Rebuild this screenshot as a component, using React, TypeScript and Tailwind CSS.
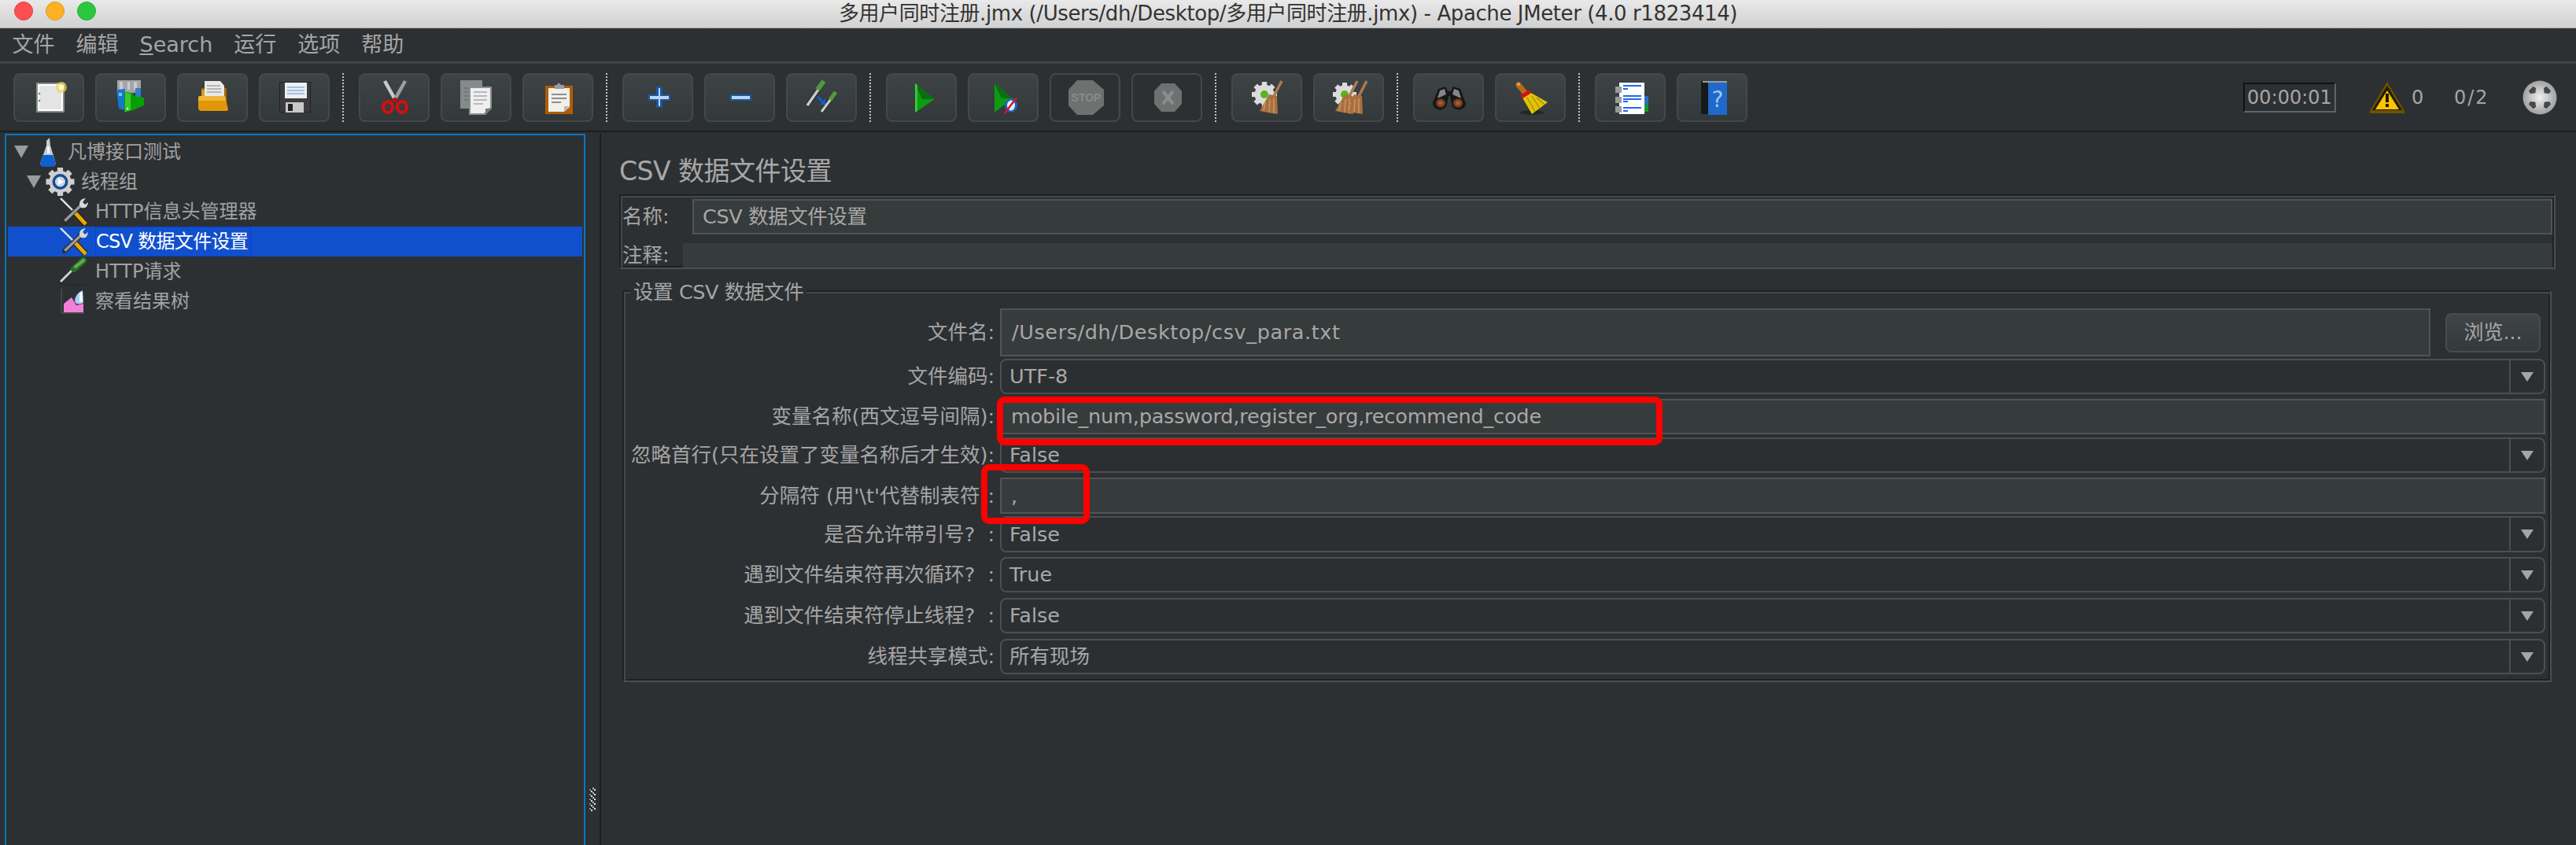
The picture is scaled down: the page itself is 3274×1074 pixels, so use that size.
import type { ReactNode } from "react";

const Svg = ({ children, box = "0 0 48 48", cls = "w-12 h-12" }: { children: ReactNode; box?: string; cls?: string }) => (
  <svg viewBox={box} className={`${cls} shrink-0`}>
    {children}
  </svg>
);

// gear shape shared by thread group + clear icons
const Gear = ({ cx, cy, r, fill = "#dcdcdc" }: { cx: number; cy: number; r: number; fill?: string }) => (
  <g>
    <circle cx={cx} cy={cy} r={r * 0.78} fill={fill} />
    {[0, 45, 90, 135, 180, 225, 270, 315].map((a) => (
      <rect
        key={a}
        x={cx - r * 0.2}
        y={cy - r}
        width={r * 0.4}
        height={r * 0.4}
        fill={fill}
        transform={`rotate(${a} ${cx} ${cy})`}
      />
    ))}
  </g>
);

const Broom = ({ dx = 0 }: { dx?: number }) => (
  <g transform={`translate(${dx} 0)`}>
    <path d="M43 3 L31 26" stroke="#a97b4f" strokeWidth="3.5" />
    <path d="M27 20 L37 22 L38 45 L25 43 L15 41 Z" fill="#a8703f" />
    <path d="M22 30 L20 41 M28 26 L27 43 M33 25 L33 44" stroke="#c99461" strokeWidth="1.6" />
  </g>
);

const icons: Record<string, ReactNode> = {
  new: (
    <Svg>
      <rect x="8" y="5" width="36" height="38" fill="#8b8d8b" />
      <rect x="10" y="7" width="32" height="34" fill="#fff" />
      <rect x="12" y="9" width="28" height="30" fill="#e4e4e4" />
      <circle cx="12" cy="19" r="1.3" fill="#777" />
      <circle cx="12" cy="28" r="1.3" fill="#777" />
      <circle cx="40" cy="11" r="7" fill="#e6d84f" opacity="0.7" />
      <circle cx="40" cy="11" r="3.5" fill="#fff8c8" />
    </Svg>
  ),
  templates: (
    <Svg>
      <rect x="7" y="2" width="30" height="16" fill="#a3a5a7" />
      <path d="M10 4h4v10h-4zM20 4h3v10h-3zM28 4h4v10h-4z" fill="#c9cbcc" />
      <path d="M6 14 L17 13 L17 40 L9 38 Z" fill="#1877c9" />
      <rect x="9" y="18" width="4" height="4" fill="#7cc0f0" />
      <path d="M30 12h7v14h-7z" fill="#2a82c4" />
      <path d="M16 17 L26 18 L28 22 L41 24 L41 34 L27 40 L16 43 Z" fill="#05a005" />
      <path d="M17 18 L24 19 L24 40 L17 42 Z" fill="#3ec82b" />
      <rect x="19" y="37" width="2" height="2" fill="#fff" />
    </Svg>
  ),
  open: (
    <Svg>
      <path d="M10 12 H42 V38 H10 Z" fill="#a96400" />
      <path d="M14 3 H34 L39 9 V26 H14 Z" fill="#e9e9e9" />
      <path d="M17 9h17M17 13h18M17 17h18" stroke="#a4a4a4" strokeWidth="1.4" />
      <path d="M10 14 H14 V22 H10 Z" fill="#dd9a14" />
      <path d="M6 24 Q6 22 9 22 H40 L44 39 Q44 41 41 41 H10 Q6 41 6 37 Z" fill="#e09708" />
      <path d="M6 24 Q6 22 9 22 H40 L41 28 H6 Z" fill="#f0b53a" />
    </Svg>
  ),
  save: (
    <Svg>
      <path d="M5 4 H45 V43 H5 Z" fill="#222" />
      <rect x="6" y="5" width="38" height="37" fill="#3c3c3c" />
      <rect x="12" y="5" width="28" height="20" fill="#e9f0f6" />
      <path d="M15 11h22M15 15h22M15 19h22" stroke="#91b1cf" strokeWidth="1.6" />
      <rect x="13" y="30" width="23" height="13" fill="#c8c8c8" />
      <rect x="16" y="32" width="6" height="9" fill="#222" />
    </Svg>
  ),
  cut: (
    <Svg>
      <path d="M12 3 L26 28" stroke="#c9c9c9" strokeWidth="4.5" />
      <path d="M38 3 L24 28" stroke="#9d9d9d" strokeWidth="4.5" />
      <ellipse cx="16" cy="36" rx="6" ry="7" fill="none" stroke="#d80d0d" strokeWidth="4" />
      <ellipse cx="34" cy="36" rx="6" ry="7" fill="none" stroke="#d80d0d" strokeWidth="4" />
      <circle cx="25" cy="27" r="3" fill="#c40808" />
    </Svg>
  ),
  copy: (
    <Svg>
      <rect x="4" y="2" width="28" height="36" fill="#858a8c" />
      <path d="M9 12h16M9 17h16M9 22h16M9 27h16" stroke="#6b7072" strokeWidth="1.4" />
      <path d="M15 10 H44 V38 L36 46 H15 Z" fill="#8c8f8f" />
      <path d="M17 12 H42 V36 L34 44 H17 Z" fill="#efefef" />
      <path d="M21 17h17M21 22h17M21 27h17M21 32h12" stroke="#a8a8a8" strokeWidth="1.6" />
      <path d="M36 46 V38 H44 Z" fill="#777" />
    </Svg>
  ),
  paste: (
    <Svg>
      <rect x="8" y="9" width="35" height="36" fill="#b25c06" />
      <path d="M12 12 H39 V36 L32 42 H12 Z" fill="#f0f0ea" />
      <path d="M16 20h19M16 25h19M16 30h12" stroke="#8f8f8f" strokeWidth="1.8" />
      <path d="M32 42 L32 35 L39 35 Z" fill="#b9b9b3" />
      <path d="M20 8 H23 Q25 3 28 8 H32 V13 H20 Z" fill="#9a9d9f" />
    </Svg>
  ),
  plus: (
    <Svg>
      <path d="M22 10 H30 V20 H40 V28 H30 V37 H22 V28 H12 V20 H22 Z" fill="#1b56a3" />
      <path d="M25 12 H27 V22 H38 V26 H27 V35 H25 V26 H14 V22 H25 Z" fill="#b9d6f4" />
    </Svg>
  ),
  minus: (
    <Svg>
      <rect x="12" y="20" width="27" height="8" fill="#1b56a3" />
      <rect x="14" y="22" width="23" height="4" fill="#b9d6f4" />
    </Svg>
  ),
  dup: (
    <Svg>
      <path d="M6 34 L20 14" stroke="#2c2c2c" strokeWidth="6" />
      <path d="M6 34 L20 14" stroke="#c9c9c9" strokeWidth="3.5" />
      <path d="M19 14 L27 3" stroke="#4f9b3c" strokeWidth="6" />
      <path d="M24 42 L36 26" stroke="#2c2c2c" strokeWidth="5" />
      <path d="M24 42 L36 26" stroke="#cfcfcf" strokeWidth="3" />
      <path d="M35 27 L42 17" stroke="#4f9b3c" strokeWidth="5" />
      <path d="M19 23 L26 30" stroke="#0d5fd6" strokeWidth="2.5" />
      <path d="M29 25 L29 33 L22 33 Z" fill="#0d5fd6" />
    </Svg>
  ),
  start: (
    <Svg>
      <path d="M16 6 L41 26 L16 43 Z" fill="#0b9c11" />
      <path d="M16 6 L41 26 L25 26 Z" fill="#0c6d12" />
      <path d="M16 6 L19 8 L19 41 L16 43 Z" fill="#35c93a" />
    </Svg>
  ),
  startNo: (
    <Svg>
      <path d="M13 6 L36 25 L13 43 Z" fill="#0b9c11" />
      <path d="M13 6 L36 25 L22 25 Z" fill="#0c6d12" />
      <ellipse cx="34" cy="34" rx="8" ry="9" fill="#1e63c0" />
      <ellipse cx="34" cy="34" rx="5" ry="6.5" fill="#e9edf2" />
      <path d="M26 44 L41 24" stroke="#d5132b" strokeWidth="2.4" />
    </Svg>
  ),
  stop: (
    <Svg>
      <path d="M14 2 H34 L48 14 V34 L34 46 H14 L3 34 V14 Z" fill="#6f7070" />
      <text x="25.5" y="29" textAnchor="middle" fontSize="14" fontWeight="700" fill="#8a8b8b" fontFamily="'Liberation Sans',sans-serif">STOP</text>
    </Svg>
  ),
  shutdown: (
    <Svg>
      <path d="M17 6 H34 L43 16 V32 L34 42 H17 L8 32 V16 Z" fill="#6f7070" />
      <path d="M19 16 L32 32 M32 16 L19 32" stroke="#8d8e8e" strokeWidth="4" />
    </Svg>
  ),
  clear: (
    <Svg>
      <Gear cx={21} cy={20} r={16} />
      <circle cx={21} cy={20} r={5} fill="#58b51d" />
      <Broom />
    </Svg>
  ),
  clearAll: (
    <Svg>
      <Gear cx={19} cy={20} r={15} />
      <circle cx={19} cy={20} r={5} fill="#58b51d" />
      <Broom dx={-8} />
      <Broom dx={4} />
    </Svg>
  ),
  search: (
    <Svg>
      <path d="M11 13 L20 10 L23 16 L27 16 L30 10 L39 13 L44 27 L46 31 A9 8 0 0 1 28 32 L26 22 L24 22 L22 32 A9 8 0 0 1 4 31 Z" fill="#161616" />
      <path d="M13 15 L19 13 L21 20 L10 25 Z M31 13 L37 15 L40 25 L29 20 Z" fill="#858585" />
      <ellipse cx="14" cy="31" rx="6" ry="5.5" fill="#70401f" />
      <ellipse cx="36" cy="31" rx="6" ry="5.5" fill="#70401f" />
      <ellipse cx="14" cy="31" rx="3" ry="2.8" fill="#a9592a" />
      <ellipse cx="36" cy="31" rx="3" ry="2.8" fill="#a9592a" />
    </Svg>
  ),
  broom: (
    <Svg>
      <ellipse cx="26" cy="43" rx="15" ry="3" fill="#23272a" />
      <path d="M9 8 L19 20" stroke="#b86a16" strokeWidth="7" strokeLinecap="round" />
      <circle cx="9" cy="7" r="2" fill="#e2a35a" />
      <path d="M12 21 L23 17 L46 30 L26 45 Z" fill="#e0c20a" />
      <path d="M20 24 L30 42 M26 22 L36 38 M32 24 L42 33" stroke="#a88a05" strokeWidth="1.2" />
      <path d="M13 23 L24 16" stroke="#d80f0f" strokeWidth="5" />
    </Svg>
  ),
  functions: (
    <Svg>
      <rect x="40" y="22" width="7" height="11" fill="#2a6fc4" />
      <rect x="40" y="33" width="7" height="9" fill="#139a2a" />
      <rect x="10" y="5" width="32" height="40" fill="#fff" />
      <path d="M15 9h23M15 13h6M15 22h23M15 26h23M15 29h6M15 37h23M15 41h6" stroke="#2168ec" strokeWidth="1.8" />
      <rect x="5" y="10" width="8" height="8" fill="#9a9a9a" />
      <rect x="5" y="23" width="8" height="8" fill="#9a9a9a" />
      <rect x="5" y="35" width="8" height="8" fill="#9a9a9a" />
    </Svg>
  ),
  help: (
    <Svg>
      <rect x="10" y="3" width="9" height="42" fill="#17191b" />
      <rect x="19" y="5" width="24" height="41" fill="#1e69c9" />
      <rect x="12" y="3" width="31" height="2" fill="#9a9c9e" />
      <text x="31" y="36" textAnchor="middle" fontSize="28" fill="#9fc6ee" fontFamily="'DejaVu Sans',sans-serif">?</text>
    </Svg>
  ),
};

type TbItem = { icon: string; off?: boolean } | "sep";

const toolbar: TbItem[] = [
  { icon: "new" },
  { icon: "templates" },
  { icon: "open" },
  { icon: "save" },
  "sep",
  { icon: "cut" },
  { icon: "copy" },
  { icon: "paste" },
  "sep",
  { icon: "plus" },
  { icon: "minus" },
  { icon: "dup" },
  "sep",
  { icon: "start" },
  { icon: "startNo" },
  { icon: "stop", off: true },
  { icon: "shutdown", off: true },
  "sep",
  { icon: "clear" },
  { icon: "clearAll" },
  "sep",
  { icon: "search" },
  { icon: "broom" },
  "sep",
  { icon: "functions" },
  { icon: "help" },
];

const Flask = () => (
  <Svg box="0 0 22 37" cls="w-[22px] h-[37px]">
    <path d="M13 0 L14 10 L20 30 Q22 36 17 36 H5 Q0 36 2 30 L9 10 L9 4 Z" fill="#c5ccd2" />
    <path d="M5 22 H17 L20 30 Q22 36 17 37 H5 Q0 36 2 30 Z" fill="#0e5fd0" />
    <path d="M10 11 H13 V20 H10 Z" fill="#f4f6f8" />
  </Svg>
);

const ThreadGear = () => (
  <Svg box="0 0 37 36" cls="w-[37px] h-[36px]">
    <Gear cx={18.5} cy={18} r={18} fill="#cfcfcf" />
    <circle cx="18.5" cy="18" r="10" fill="#1a4c8f" />
    <circle cx="18.5" cy="18" r="6.5" fill="#c9d6e6" />
    <path d="M16 14 L23 18 L16 22 Z" fill="#fff" />
  </Svg>
);

const Tools = () => (
  <Svg box="0 0 36 36" cls="w-[36px] h-[36px]">
    <path d="M1 1 L21 21" stroke="#e6e6e6" strokeWidth="2.4" />
    <path d="M30 7 L5 31" stroke="#2a2a2a" strokeWidth="6" />
    <path d="M30 7 L6 30" stroke="#9a9a9a" strokeWidth="3.4" />
    <circle cx="5" cy="31" r="2" fill="#2a2a2a" />
    <path d="M25 10 Q24 2 33 1 L29 6 L32 9 L36 6 Q35 15 27 13 Z" fill="#d8d8d8" />
    <path d="M20 20 L33 34" stroke="#1a1a1a" strokeWidth="7" />
    <path d="M20 20 L33 34" stroke="#eba800" strokeWidth="5" />
  </Svg>
);

const Pipette = () => (
  <Svg box="0 0 37 36" cls="w-[37px] h-[36px]">
    <path d="M6 35 H34" stroke="#262a2c" strokeWidth="2" />
    <path d="M1 33 L20 14" stroke="#2a2a2a" strokeWidth="5.5" />
    <path d="M3 31 L20 14" stroke="#d0d0d0" strokeWidth="3" />
    <path d="M20 15 L32 4" stroke="#2a6d27" strokeWidth="8" strokeLinecap="round" />
    <path d="M22 12 L32 4" stroke="#5bb04a" strokeWidth="4" strokeLinecap="round" />
  </Svg>
);

const ResultTree = () => (
  <Svg box="0 0 30 32" cls="w-[30px] h-[32px]">
    <path d="M1 0 V31 H30" stroke="#4a4d4e" strokeWidth="1.5" fill="none" />
    <path d="M4 30 V19 L14 11 L20 21 L29 19 V30 Z" fill="#f27fd8" />
    <path d="M18 16 Q18 7 28 2 L29 18 Q20 22 18 16 Z" fill="#a9cdf0" />
    <path d="M24 5 L28 3 L28 16 L24 17 Z" fill="#eef6ff" />
  </Svg>
);

const rows = [
  { text: "凡博接口测试", pad: "pl-[8px]", arrow: true, icon: <Flask />, gap: "ml-[14px]", iconBox: "ml-[14px] w-[22px]" },
  { text: "线程组", pad: "pl-[24px]", arrow: true, icon: <ThreadGear />, gap: "ml-[8px]", iconBox: "ml-[6px] w-[37px]" },
  { text: "HTTP信息头管理器", pad: "pl-[66px]", icon: <Tools />, gap: "ml-[9px]", iconBox: "w-[36px]" },
  { text: "CSV 数据文件设置", pad: "pl-[66px]", icon: <Tools />, gap: "ml-[9px] tracking-[-0.7px]", iconBox: "w-[36px]", selected: true },
  { text: "HTTP请求", pad: "pl-[64px]", icon: <Pipette />, gap: "ml-[10px]", iconBox: "w-[37px]" },
  { text: "察看结果树", pad: "pl-[67px]", icon: <ResultTree />, gap: "ml-[14px]", iconBox: "w-[30px]" },
];

const TreeArrow = () => <div className="w-0 h-0 border-l-[9px] border-r-[9px] border-t-[16px] border-l-transparent border-r-transparent border-t-[#9b9b9b]" />;

type FormRow = {
  label: string;
  value: string;
  kind: "file" | "combo" | "input";
  row: string;
  track?: string;
  note?: "vars" | "delim";
};

const form: FormRow[] = [
  { label: "文件名:", value: "/Users/dh/Desktop/csv_para.txt", kind: "file", row: "h-[61px] mt-[21px]", track: "tracking-[0.6px]" },
  { label: "文件编码:", value: "UTF-8", kind: "combo", row: "h-[45px] mt-[3px]" },
  { label: "变量名称(西文逗号间隔):", value: "mobile_num,password,register_org,recommend_code", kind: "input", row: "h-[45px] mt-[6px]", track: "tracking-[-0.17px]", note: "vars" },
  { label: "忽略首行(只在设置了变量名称后才生效):", value: "False", kind: "combo", row: "h-[45px] mt-[4px]" },
  { label: "分隔符 (用'\\t'代替制表符):", value: ",", kind: "input", row: "h-[46px] mt-[6px]", note: "delim" },
  { label: "是否允许带引号?  :", value: "False", kind: "combo", row: "h-[46px] mt-[3px]" },
  { label: "遇到文件结束符再次循环?  :", value: "True", kind: "combo", row: "h-[45px] mt-[6px]" },
  { label: "遇到文件结束符停止线程?  :", value: "False", kind: "combo", row: "h-[45px] mt-[7px]" },
  { label: "线程共享模式:", value: "所有现场", kind: "combo", row: "h-[45px] mt-[7px]" },
];

const etched = "border-2 border-t-[#1e2123] border-l-[#1e2123] border-r-[#4b4f50] border-b-[#4b4f50] shadow-[inset_2px_2px_0_#44484a,inset_-2px_-2px_0_#1e2123]";
const fieldBox = "border-2 border-[#505455] bg-[#363b3b] text-[#a8a8a8]";

function Field({ r }: { r: FormRow }) {
  if (r.kind === "combo") {
    return (
      <div className="flex-1 h-full flex items-center rounded-lg border-2 border-[#4b4f51] bg-[#2c2f32] text-[#a8a8a8]">
        <span className="flex-1 pl-[10px]">{r.value}</span>
        <span className="w-[44px] h-full flex items-center justify-center border-l-2 border-[#4b4f51]">
          <span className="w-0 h-0 border-l-[8px] border-r-[8px] border-t-[12px] border-l-transparent border-r-transparent border-t-[#a5a5a5]" />
        </span>
      </div>
    );
  }
  if (r.kind === "file") {
    return (
      <div className="flex-1 h-full flex items-center">
        <div className={`flex-1 h-full flex items-center pl-[13px] ${fieldBox} ${r.track ?? ""}`}>{r.value}</div>
        <button className="ml-[19px] mr-[6px] w-[121px] h-[50px] rounded-lg border-2 border-[#484c4e] bg-gradient-to-b from-[#3f4447] to-[#34393b] text-[#a8a8a8] text-[25px]">
          浏览...
        </button>
      </div>
    );
  }
  return (
    <div className={`relative flex-1 h-full flex items-center pl-[12px] ${fieldBox} ${r.track ?? ""}`}>
      {r.value}
      {r.note === "vars" && <div className="absolute -left-[6px] -top-[5px] w-[846px] h-[62px] border-[8px] border-[#ff0000] rounded-[10px]" />}
      {r.note === "delim" && <div className="absolute -left-[26px] -top-[19px] w-[138px] h-[76px] border-[8px] border-[#ff0000] rounded-[10px]" />}
    </div>
  );
}

export default function App() {
  return (
    <div className="h-screen w-full overflow-hidden flex flex-col bg-[#2d3033] font-['DejaVu_Sans','Noto_Sans_CJK_SC',sans-serif] text-[#a5a5a5]">
      {/* window title */}
      <div className="relative h-[36px] shrink-0 flex items-center justify-center bg-gradient-to-b from-[#e9e9e9] to-[#d1d1d1] border-b border-[#aeaeae] text-[#333] text-[26px] tracking-[-0.4px]">
        <div className="absolute left-[18px] top-[2px] flex gap-[16px]">
          <span className="w-[24px] h-[24px] rounded-full bg-[#fc4f4f] border border-[#e0403f]" />
          <span className="w-[24px] h-[24px] rounded-full bg-[#fdb024] border border-[#e09a1f]" />
          <span className="w-[24px] h-[24px] rounded-full bg-[#2ac83f] border border-[#22ad35]" />
        </div>
        多用户同时注册.jmx (/Users/dh/Desktop/多用户同时注册.jmx) - Apache JMeter (4.0 r1823414)
      </div>

      {/* menu */}
      <div className="h-[45px] shrink-0 flex items-center pl-[2px] border-b-[3px] border-[#434343] text-[27px] text-[#a5a5a5]">
        {["文件", "编辑", "Search", "运行", "选项", "帮助"].map((m) => (
          <span key={m} className="px-[13.5px]">
            {m === "Search" ? (
              <>
                <span className="underline">S</span>earch
              </>
            ) : (
              m
            )}
          </span>
        ))}
      </div>

      {/* toolbar */}
      <div className="h-[87px] shrink-0 flex items-center pl-[17px] pr-[24px] gap-[14px] border-b-[2px] border-[#1b1e20]">
        {toolbar.map((t, i) =>
          t === "sep" ? (
            <div key={i} className="h-[62px] w-0 ml-[2px] mr-[5px] border-l-2 border-dotted border-[#c4c4c4]" />
          ) : (
            <div
              key={i}
              className={`w-[90px] h-[62px] flex items-center justify-center rounded-lg border-2 ${
                t.off ? "border-[#44484a] bg-[#2d3033]" : "border-[#44484a] bg-gradient-to-b from-[#3e4346] to-[#33383a]"
              }`}
            >
              {icons[t.icon]}
            </div>
          )
        )}
        <div className="ml-auto flex items-center text-[24px]">
          <div className="w-[118px] h-[38px] flex items-center justify-center border-2 border-t-[#111] border-l-[#111] border-r-[#5b666a] border-b-[#5b666a]">00:00:01</div>
          <svg viewBox="0 0 44 40" className="ml-[43px] w-[44px] h-[40px]">
            <path d="M22 0 L44 37 V40 H0 V37 Z" fill="#6a5300" />
            <path d="M22 5 L41 36 H3 Z" fill="#1f1a05" />
            <path d="M22 11 L37 35 H7 Z" fill="#fdc300" />
            <rect x="20" y="15" width="4" height="11" fill="#1c1700" />
            <rect x="20" y="28" width="4" height="4" fill="#1c1700" />
          </svg>
          <span className="ml-[9px] w-[15px]">0</span>
          <span className="ml-[39px] w-[44px] tracking-[2px]">0/2</span>
          <svg viewBox="0 0 44 44" className="ml-[43px] w-[44px] h-[44px]">
            <defs>
              <radialGradient id="logGrad">
                <stop offset="0" stopColor="#f0f0f0" />
                <stop offset="1" stopColor="#a0a0a0" />
              </radialGradient>
            </defs>
            <circle cx="22" cy="22" r="21.5" fill="url(#logGrad)" />
            {[45, 135, 225, 315].map((a) => (
              <path key={a} d="M18 6 H26 L27 10 L22 14 L17 10 Z" fill="#45484a" transform={`rotate(${a} 22 22)`} />
            ))}
          </svg>
        </div>
      </div>

      <div className="relative flex-1 min-h-0 flex pt-[2px] pl-[6px] pr-[2px] bg-[#2d3033]">
        {/* test plan tree */}
        <div className="w-[738px] shrink-0 border-2 border-b-0 border-[#0a76bd] pt-[2px] px-[2px] text-[24px] text-[#a2a2a2]">
          {rows.map((r) => (
            <div key={r.text} className={`h-[38px] flex items-center ${r.pad} ${r.selected ? "bg-[#1150cc] text-white" : ""}`}>
              {r.arrow && <TreeArrow />}
              <span className={`flex justify-center ${r.iconBox}`}>{r.icon}</span>
              <span className={`${r.gap} h-full flex items-center ${r.selected ? "border border-[#0a3fd8] pr-[3px]" : ""}`}>{r.text}</span>
            </div>
          ))}
        </div>

        {/* splitter grip */}
        <div className="w-[18px] shrink-0 flex items-end justify-center pb-[43px]">
          <svg viewBox="0 0 8 30" className="w-[8px] h-[30px]">
            {[0, 6, 12, 18, 24].map((y) => (
              <g key={y}>
                <rect x="0" y={y + 2} width="2" height="2" fill="#8d8d8d" />
                <rect x="4" y={y} width="2" height="2" fill="#bdbdbd" />
                <rect x="2" y={y + 4} width="2" height="2" fill="#e8e8e8" />
                <rect x="6" y={y + 2} width="2" height="2" fill="#e8e8e8" />
              </g>
            ))}
          </svg>
        </div>

        {/* element panel */}
        <div className="flex-1 min-w-0 border-l-2 border-[#1b1e20] pl-[23px] pr-[24px] text-[25.5px]">
          <div className="h-[77px] flex items-center text-[33px] text-[#a8a8a8] tracking-[-0.5px] pt-[18px]">CSV 数据文件设置</div>

          <div className={`h-[95px] pl-[2px] pr-[2px] ${etched}`}>
            <div className="h-[50px] pt-[3px] flex items-center">
              <span className="w-[89px]">名称:</span>
              <div className={`flex-1 h-[45px] flex items-center pl-[11px] tracking-[-0.4px] ${fieldBox}`}>CSV 数据文件设置</div>
            </div>
            <div className="h-[36px] flex items-center mt-[7px]">
              <span className="w-[77px]">注释:</span>
              <div className="flex-1 h-[31px] bg-[#363b3b]" />
            </div>
          </div>

          <div className={`relative mt-[27px] ml-[4px] mr-[5px] pr-[6px] pb-[8px] ${etched}`}>
            <div className="absolute left-[8px] -top-[18px] h-[36px] flex items-center px-[4px] bg-[#2d3033] tracking-[-0.4px]">设置 CSV 数据文件</div>
            {form.map((r) => (
              <div key={r.label} className={`flex items-center ${r.row}`}>
                <span className="w-[472px] shrink-0 text-right pr-[1px] whitespace-pre">{r.label}</span>
                <div className="ml-[6px] flex-1 h-full flex">
                  <Field r={r} />
                </div>
              </div>
            ))}
          </div>
        </div>
      </div>
    </div>
  );
}
